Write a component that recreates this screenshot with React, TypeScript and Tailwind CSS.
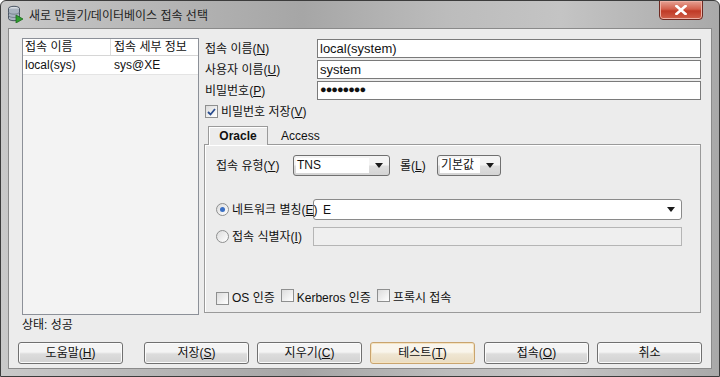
import React from 'react';

const font = { fontFamily: '"Liberation Sans", "Noto Sans CJK KR", sans-serif' };

function DbIcon() {
  return (
    <svg width="17" height="18" viewBox="0 0 17 18">
      <ellipse cx="7" cy="3.5" rx="5.5" ry="2.2" fill="#d8dde3" stroke="#4a5563" strokeWidth="1" />
      <path d="M1.5 3.5 V13.5 A5.5 2.2 0 0 0 12.5 13.5 V3.5" fill="#a9b3bf" stroke="#4a5563" strokeWidth="1" />
      <path d="M1.5 7 A5.5 2.2 0 0 0 12.5 7" fill="none" stroke="#6b7684" strokeWidth="0.8" />
      <path d="M1.5 10.3 A5.5 2.2 0 0 0 12.5 10.3" fill="none" stroke="#6b7684" strokeWidth="0.8" />
      <path d="M9 10 L16 14 L9 18 Z" fill="#2f9e2f" stroke="#1d6b1d" strokeWidth="0.8" />
    </svg>
  );
}

function Arrow() {
  return (
    <svg width="8" height="5" viewBox="0 0 8 5">
      <path d="M0 0 H8 L4 5 Z" fill="#1a1a1a" />
    </svg>
  );
}

function Check({ checked }: { checked?: boolean }) {
  return (
    <span className="inline-flex items-center justify-center w-[13px] h-[13px] border border-[#8e8f8f] bg-[linear-gradient(135deg,#dcdcdc,#ffffff)] shrink-0">
      {checked && (
        <svg width="9" height="8" viewBox="0 0 9 8">
          <path d="M1 4 L3.5 6.5 L8 1" fill="none" stroke="#2a4d8f" strokeWidth="1.8" />
        </svg>
      )}
    </span>
  );
}

function Radio({ checked }: { checked?: boolean }) {
  return (
    <span className="inline-flex items-center justify-center w-[13px] h-[13px] rounded-full border border-[#8e8f8f] bg-[linear-gradient(135deg,#dcdcdc,#ffffff)] shrink-0">
      {checked && <span className="w-[5px] h-[5px] rounded-full bg-[#3a6fc4]" />}
    </span>
  );
}

function Btn({ children, focus, className }: { children: React.ReactNode; focus?: boolean; className?: string }) {
  return (
    <div
      className={
        'w-[105px] h-[22px] rounded-[3px] flex items-center justify-center text-[12px] text-[#111] ' +
        (focus
          ? 'border border-[#c9a46e] bg-[linear-gradient(#f9f5ec_45%,#efe6d3_55%,#e9dcc2)] shadow-[inset_0_0_0_1px_#f5e3c0]'
          : 'border border-[#707070] bg-[linear-gradient(#f4f4f4_45%,#dcdcdc_55%,#d2d2d2)] shadow-[inset_0_0_0_1px_#fbfbfb]') +
        ' ' +
        (className || '')
      }
    >
      {children}
    </div>
  );
}

export default function App() {
  return (
    <div style={font} className="w-[720px] h-[377px] bg-white">
      <div className="w-[720px] h-[377px] rounded-t-[6px] border border-[#3c3c3c] bg-[linear-gradient(90deg,#c9c9c9,#b3b3b3_25%,#a6a6a6_42%,#bcbcbc_62%,#c4c4c4_78%,#a9a9a9)] flex flex-col overflow-hidden">
        {/* TITLE BAR */}
        <div className="h-[27px] flex items-start relative shrink-0">
          <div className="ml-[6px] mt-[4px]">
            <DbIcon />
          </div>
          <span className="ml-[5px] mt-[6px] text-[12px] text-[#1e1e1e]">새로 만들기/데이터베이스 접속 선택</span>
          <div className="absolute left-[658px] top-[-1px] w-[44px] h-[20px] rounded-b-[4px] border border-[#6e2a22] bg-[linear-gradient(#e6a294,#d3604c_45%,#c03a26_55%,#d0604a)] flex items-center justify-center shadow-[inset_0_0_0_1px_#eeb0a4]">
            <svg width="12" height="10" viewBox="0 0 12 10">
              <path d="M1.5 1 L10.5 9 M10.5 1 L1.5 9" stroke="#ffffff" strokeWidth="2.6" strokeLinecap="square" />
            </svg>
          </div>
        </div>

        {/* CLIENT */}
        <div className="mx-[7px] h-[341px] border border-[#8a8a8a] bg-[#ececec] flex flex-col">
          <div className="flex mt-[9px] h-[277px]">
            {/* LIST */}
            <div className="ml-[13px] w-[177px] h-[277px] border border-[#8c9098] bg-[#f3f3f3] flex flex-col">
              <div className="flex h-[17px] bg-white border-b border-[#d6d6d6] text-[12px] text-[#111]">
                <div className="w-[88px] pl-[2px] border-r border-[#dcdcdc] leading-[17px]">접속 이름</div>
                <div className="pl-[3px] leading-[17px]">접속 세부 정보</div>
              </div>
              <div className="flex h-[19px] bg-white border-b border-[#e4e4e4] text-[12px] text-[#111]">
                <div className="w-[88px] pl-[2px] leading-[18px]">local(sys)</div>
                <div className="pl-[3px] leading-[18px]">sys@XE</div>
              </div>
            </div>

            {/* RIGHT */}
            <div className="ml-[5px] w-[497px] flex flex-col text-[12px] text-[#111]">
              <div className="flex items-center h-[19px] mt-[1px]">
                <div className="w-[113px] pl-[1px]">
                  접속 이름(<u>N</u>)
                </div>
                <div className="flex-1 h-[19px] border border-[#7a7a7a] bg-white pl-[2px] leading-[17px] text-[13px]">local(system)</div>
              </div>
              <div className="flex items-center h-[19px] mt-[2px]">
                <div className="w-[113px] pl-[1px]">
                  사용자 이름(<u>U</u>)
                </div>
                <div className="flex-1 h-[19px] border border-[#7a7a7a] bg-white pl-[2px] leading-[17px] text-[13px]">system</div>
              </div>
              <div className="flex items-center h-[19px] mt-[2px]">
                <div className="w-[113px] pl-[1px]">
                  비밀번호(<u>P</u>)
                </div>
                <div className="flex-1 h-[19px] border border-[#7a7a7a] bg-white pl-[2px] leading-[15px] text-[11px] font-bold tracking-[-1px]">●●●●●●●●</div>
              </div>
              <div className="flex items-center gap-[3px] mt-[5px] ml-[1px] h-[13px]">
                <Check checked />
                <span>
                  비밀번호 저장(<u>V</u>)
                </span>
              </div>

              {/* TABS */}
              <div className="flex items-end h-[19px] mt-[8px] relative z-10">
                <div className="ml-[4px] w-[60px] h-[19px] border border-b-0 border-[#9a9a9a] bg-[#ececec] flex items-center justify-center font-bold text-[12px] shadow-[inset_1px_1px_0_#ffffff]">
                  Oracle
                </div>
                <div className="ml-[13px] h-[17px] leading-[17px]">Access</div>
              </div>
              <div className="-mt-[1px] h-[169px] border border-[#9a9a9a] bg-[#ececec] shadow-[inset_1px_1px_0_#ffffff] flex flex-col">
                <div className="flex items-center mt-[10px] ml-[11px] h-[21px]">
                  <div className="w-[77px]">
                    접속 유형(<u>Y</u>)
                  </div>
                  <div className="w-[97px] h-[21px] rounded-[3px] border border-[#707070] bg-[linear-gradient(#f4f4f4_45%,#dedede_55%,#d4d4d4)] flex items-center pr-[6px]">
                    <span className="ml-[2px] px-[1px] bg-white leading-[15px] flex-1">TNS</span>
                    <span className="ml-[6px]">
                      <Arrow />
                    </span>
                  </div>
                  <div className="ml-[10px] w-[37px]">
                    롤(<u>L</u>)
                  </div>
                  <div className="w-[64px] h-[21px] rounded-[3px] border border-[#707070] bg-[linear-gradient(#f4f4f4_45%,#dedede_55%,#d4d4d4)] flex items-center pr-[6px]">
                    <span className="ml-[2px] px-[1px] bg-white leading-[15px] flex-1">기본값</span>
                    <span className="ml-[6px]">
                      <Arrow />
                    </span>
                  </div>
                </div>

                <div className="flex items-center mt-[23px] ml-[11px] h-[21px]">
                  <div className="w-[97px] flex items-center gap-[3px] relative z-10 whitespace-nowrap">
                    <Radio checked />
                    <span>
                      네트워크 별칭(<u>E</u>)
                    </span>
                  </div>
                  <div className="w-[369px] h-[21px] rounded-[3px] border border-[#8a8a8a] bg-white flex items-center pr-[6px]">
                    <span className="ml-[9px] flex-1">E</span>
                    <Arrow />
                  </div>
                </div>

                <div className="flex items-center mt-[7px] ml-[11px] h-[19px]">
                  <div className="w-[97px] flex items-center gap-[3px]">
                    <Radio />
                    <span>
                      접속 식별자(<u>I</u>)
                    </span>
                  </div>
                  <div className="w-[369px] h-[19px] border border-[#b5b5b5] bg-[#efefef]" />
                </div>

                <div className="flex items-center mt-[45px] ml-[11px] h-[14px] gap-[3px]">
                  <Check />
                  <span>OS 인증</span>
                  <span className="ml-[3px]">
                    <Check />
                  </span>
                  <span>Kerberos 인증</span>
                  <span className="ml-[3px]">
                    <Check />
                  </span>
                  <span>프록시 접속</span>
                </div>
              </div>
            </div>
          </div>

          <div className="ml-[13px] mt-[2px] h-[16px] text-[12px] text-[#111] leading-[16px]">상태: 성공</div>

          <div className="flex mt-[9px] ml-[9px]">
            <Btn>
              도움말(<u>H</u>)
            </Btn>
            <Btn className="ml-[21px]">
              저장(<u>S</u>)
            </Btn>
            <Btn className="ml-[8px]">
              지우기(<u>C</u>)
            </Btn>
            <Btn className="ml-[8px]" focus>
              테스트(<u>T</u>)
            </Btn>
            <Btn className="ml-[9px]">
              접속(<u>O</u>)
            </Btn>
            <Btn className="ml-[8px]">취소</Btn>
          </div>
        </div>
      </div>
    </div>
  );
}
